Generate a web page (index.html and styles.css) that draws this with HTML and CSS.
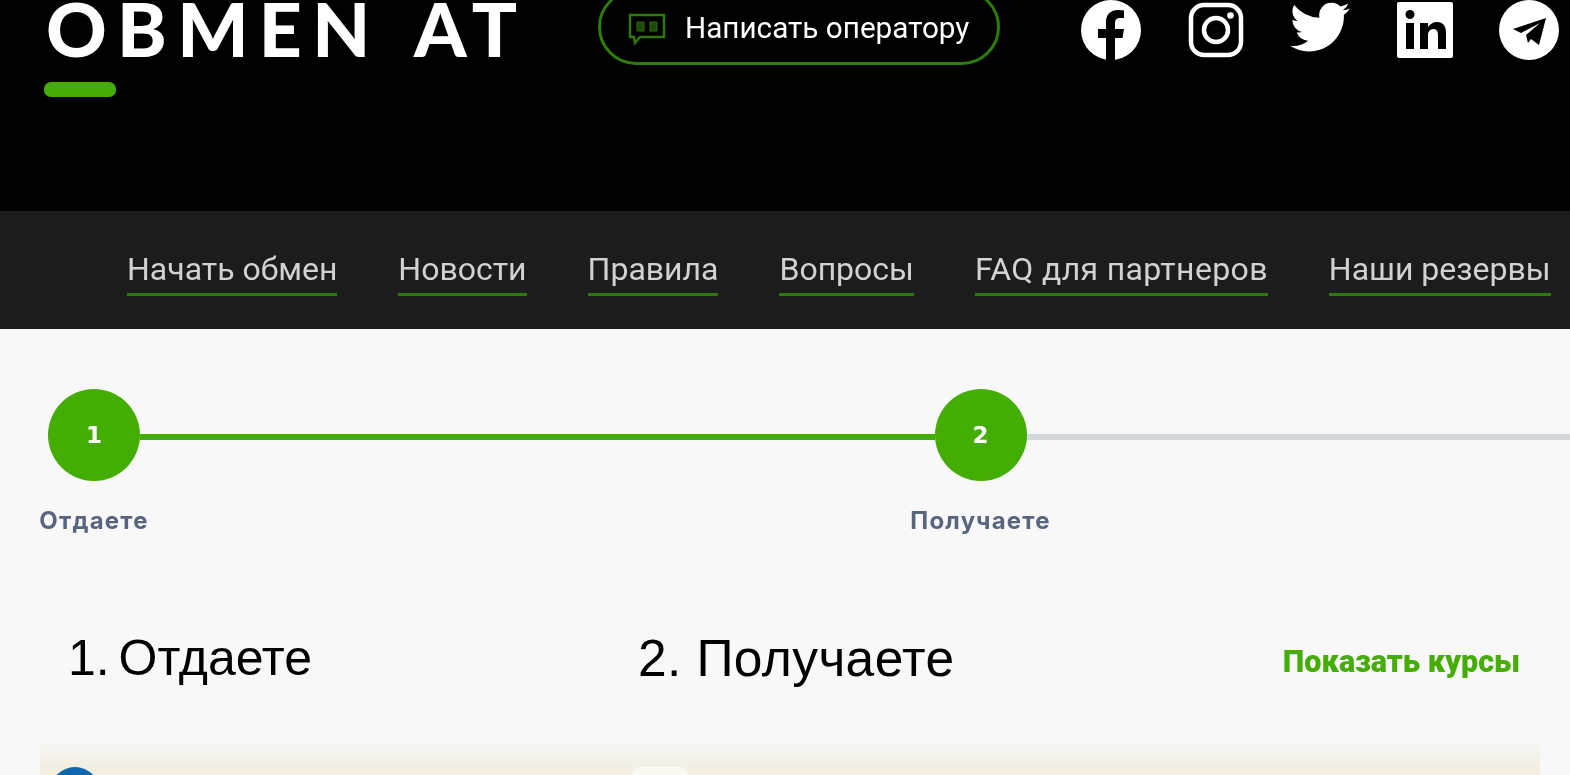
FILE: index.html
```html
<!DOCTYPE html>
<html lang="ru">
<head>
<meta charset="utf-8">
<title>Obmen AT</title>
<link rel="stylesheet" href="styles.css">
</head>
<body>
<div class="page">
  <header class="top">
    <div class="brand">
      <div class="logo">OBMEN AT</div>
      <div class="logo-bar"></div>
    </div>
    <a class="chat" href="#">
      <svg class="chat-icon" viewBox="0 0 38 32" fill="none" stroke="#2f7a05" stroke-width="2.4">
        <path d="M2 2h34v22H12l-5 6-1-6H2z"/>
        <path d="M9 9h7v9H9zM22 9h7v9h-7z" fill="#1d4a06" stroke="#2a6a08" stroke-width="1"/>
      </svg>
      <span>Написать оператору</span>
    </a>
    <nav class="social">
      <svg class="ic-fb" viewBox="0 0 60 60"><circle cx="30" cy="30" r="30" fill="#fff"/><path d="M25 60V38h-8v-9h8v-7c0-8 5-12 12-12 3 0 6 .5 6 .5v7.5h-4c-4 0-5 2.500-5 5v6h9l-1.500 9H34v22z" fill="#000"/></svg>
      <svg class="ic-ig" viewBox="0 0 56 56" fill="none" stroke="#fff"><rect x="3" y="3" width="50" height="50" rx="13" stroke-width="4.500"/><circle cx="28" cy="28" r="12" stroke-width="4.500"/><circle cx="42.500" cy="13.500" r="3.300" fill="#fff" stroke="none"/></svg>
      <svg class="ic-tw" viewBox="0 0 24 24"><path d="M23.950 4.570a10 10 0 0 1-2.820.77 4.960 4.960 0 0 0 2.160-2.720 9.900 9.900 0 0 1-3.120 1.190 4.920 4.920 0 0 0-8.380 4.480A13.930 13.930 0 0 1 1.640 3.160a4.920 4.920 0 0 0 1.520 6.570 4.900 4.900 0 0 1-2.230-.61v.06a4.920 4.920 0 0 0 3.950 4.830 5 5 0 0 1-2.210.08 4.940 4.940 0 0 0 4.600 3.420A9.870 9.870 0 0 1 0 19.540a14 14 0 0 0 7.560 2.210c9.050 0 14-7.500 14-13.980 0-.21 0-.42-.02-.63a9.940 9.940 0 0 0 2.460-2.550z" fill="#fff"/></svg>
      <svg class="ic-in" viewBox="0 0 56 56"><rect width="56" height="56" rx="2" fill="#fff"/><rect x="9" y="21" width="8" height="26" fill="#000"/><circle cx="13" cy="12.500" r="4.500" fill="#000"/><path d="M23 21h8v4c2-3 5-5 9-5 7 0 9 5 9 11v16h-8V33c0-3-1-6-4.500-6S31 30 31 33v14h-8z" fill="#000"/></svg>
      <svg class="ic-tg" viewBox="0 0 60 60"><circle cx="30" cy="30" r="30" fill="#fff"/><path d="M14 29l33-11-7 27-8-6-3 4-2-8 14-12-19 10z" fill="#000"/></svg>
    </nav>
  </header>

  <nav class="menu">
    <a href="#">Начать обмен</a>
    <a href="#">Новости</a>
    <a href="#">Правила</a>
    <a href="#">Вопросы</a>
    <a class="menu-wide" href="#">FAQ для партнеров</a>
    <a href="#">Наши резервы</a>
  </nav>

  <main class="content">
    <ol class="steps">
      <li class="step">
        <div class="step-head"><span class="dot">1</span><span class="line done"></span></div>
        <div class="step-label"><span>Отдаете</span></div>
      </li>
      <li class="step">
        <div class="step-head"><span class="dot">2</span><span class="line"></span></div>
        <div class="step-label"><span>Получаете</span></div>
      </li>
    </ol>

    <div class="titles">
      <h2 class="title-give">1. Отдаете</h2>
      <h2 class="title-get">2. Получаете</h2>
      <a class="rates" href="#">Показать курсы</a>
    </div>

    <section class="card">
      <span class="coin"></span>
      <span class="field"></span>
    </section>
  </main>
</div>
</body>
</html>
```
FILE: styles.css
```css
* { box-sizing: border-box; }
html, body { margin: 0; padding: 0; height: 100%; overflow: hidden; background: #f8f8f8; }
.page {
  width: 1570px;
  height: 775px;
  overflow: hidden;
  font-family: Roboto, "Liberation Sans", sans-serif;
  filter: blur(0.5px);
}

.top {
  height: 211px;
  background: #000;
  display: flex;
  align-items: flex-start;
  overflow: hidden;
}
.brand { width: 598px; padding-left: 44px; flex: none; }
.logo {
  margin-top: -4px;
  padding-left: 2px;
  height: 64px;
  font-family: Lato, sans-serif;
  font-weight: 900;
  font-size: 75px;
  line-height: 64px;
  letter-spacing: 10.3px;
  word-spacing: 8px;
  color: #fff;
  white-space: nowrap;
}
.logo-bar { margin-top: 22px; width: 72px; height: 15px; border-radius: 7px; background: #46ad06; }

.chat {
  flex: none;
  width: 402px;
  height: 76px;
  margin-top: -11px;
  padding-left: 27px;
  display: flex;
  align-items: center;
  gap: 19px;
  border: 3px solid #2f7d08;
  border-radius: 38px;
  color: #fff;
  text-decoration: none;
  font-size: 29.7px;
}
.chat-icon { width: 38px; height: 32px; flex: none; margin-top: 4px; }

.social { flex: none; margin-left: 81px; display: flex; align-items: flex-start; }
.ic-fb { width: 60px; height: 60px; }
.ic-ig { width: 56px; height: 56px; margin: 2px 0 0 47px; }
.ic-tw { width: 60px; height: 60px; margin: -3px 0 0 46px; }
.ic-in { width: 56px; height: 56px; margin: 2px 0 0 47px; }
.ic-tg { width: 60px; height: 60px; margin-left: 46px; }

.menu {
  height: 118px;
  padding: 36px 0 0 127px;
  background: #1c1c1c;
  display: flex;
  align-items: flex-start;
  gap: 61px;
}
.menu a {
  color: #d2d2d2;
  font-size: 32px;
  line-height: 44px;
  padding-bottom: 2px;
  border-bottom: 3px solid #2c7a08;
  text-decoration: none;
  white-space: nowrap;
}
.menu .menu-wide { letter-spacing: 0.35px; }

.content { background: #f8f8f8; height: 446px; }

.steps {
  list-style: none;
  margin: 0;
  padding: 60px 0 0 48px;
  display: flex;
  width: 2000px;
}
.step { width: 886.5px; flex: none; }
.step-head { display: flex; align-items: center; }
.dot {
  width: 92px;
  height: 92px;
  flex: none;
  border-radius: 50%;
  background: #43ad04;
  color: #fff;
  font-family: "DejaVu Sans", sans-serif;
  font-weight: 700;
  font-size: 23px;
  display: flex;
  align-items: center;
  justify-content: center;
}
.line { flex: 1; height: 6px; margin-top: 3px; background: #d3d7dc; }
.line.done { background: #43ad04; }
.step-label {
  width: 92px;
  margin-top: 26px;
  display: flex;
  justify-content: center;
  white-space: nowrap;
  color: #58657f;
  font-family: Inter, sans-serif;
  font-weight: 700;
  font-size: 24px;
  letter-spacing: 1.2px;
  line-height: 28px;
}

.titles {
  margin-top: 92px;
  padding: 0 50px 0 68px;
  height: 62px;
  display: flex;
  align-items: center;
}
.titles h2 { margin: 0; font-family: "Liberation Sans", Arial, sans-serif; font-weight: 400; line-height: 62px; color: #000; white-space: nowrap; }
.title-give { width: 570px; font-size: 50px; word-spacing: -5px; }
.title-get { font-size: 51.5px; letter-spacing: 0.4px; }
.rates {
  margin: 6px 0 0 auto;
  color: #46ad06;
  font-weight: 900;
  font-size: 30.5px;
  text-decoration: none;
  white-space: nowrap;
}

.card {
  margin: 50px 30px 0 40px;
  height: 60px;
  background: linear-gradient(#f8f8f8, #f2efe1 28px);
  padding: 28px 0 0 10px;
  display: flex;
  gap: 532px;
}
.coin { width: 50px; height: 50px; border-radius: 50%; background: #0f66ad; flex: none; }
.field { width: 56px; height: 30px; border-radius: 6px; background: #f9f8f1; flex: none; }
```
